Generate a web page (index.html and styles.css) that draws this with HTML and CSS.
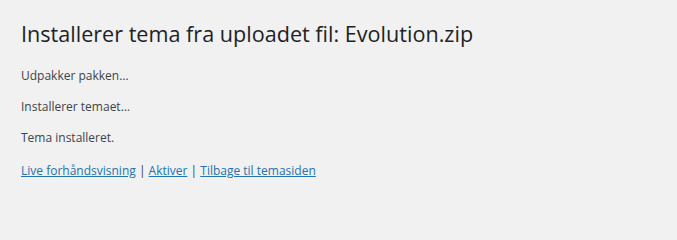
FILE: index.html
```html
<!DOCTYPE html>
<html lang="da">
<head>
<meta charset="utf-8">
<title>Installerer tema</title>
<link rel="stylesheet" href="styles.css">
</head>
<body>
<div class="wrap">
  <h1 class="title">Installerer tema fra uploadet fil: Evolution.zip</h1>
  <p class="step">Udpakker pakken…</p>
  <p class="step">Installerer temaet…</p>
  <p class="step">Tema installeret.</p>
  <p class="step actions"><a href="#">Live forhåndsvisning</a> | <a href="#">Aktiver</a> | <a href="#">Tilbage til temasiden</a></p>
</div>
</body>
</html>
```

FILE: styles.css
```css
html, body {
  margin: 0;
  background: #f1f1f1;
}
body {
  font-family: "Open Sans", "Noto Sans", sans-serif;
  color: #3c434a;
}
.wrap {
  padding: 0 21px;
}
.title {
  margin: 0;
  padding: 20px 0 6px;
  font-size: 21.6px;
  font-weight: 400;
  line-height: 1.3;
  color: #1d2327;
}
.step {
  margin: 13px 0;
  font-size: 12px;
  line-height: 18px;
}
.actions {
  margin-top: 15px;
}
.actions a {
  color: #2271b1;
}
```
